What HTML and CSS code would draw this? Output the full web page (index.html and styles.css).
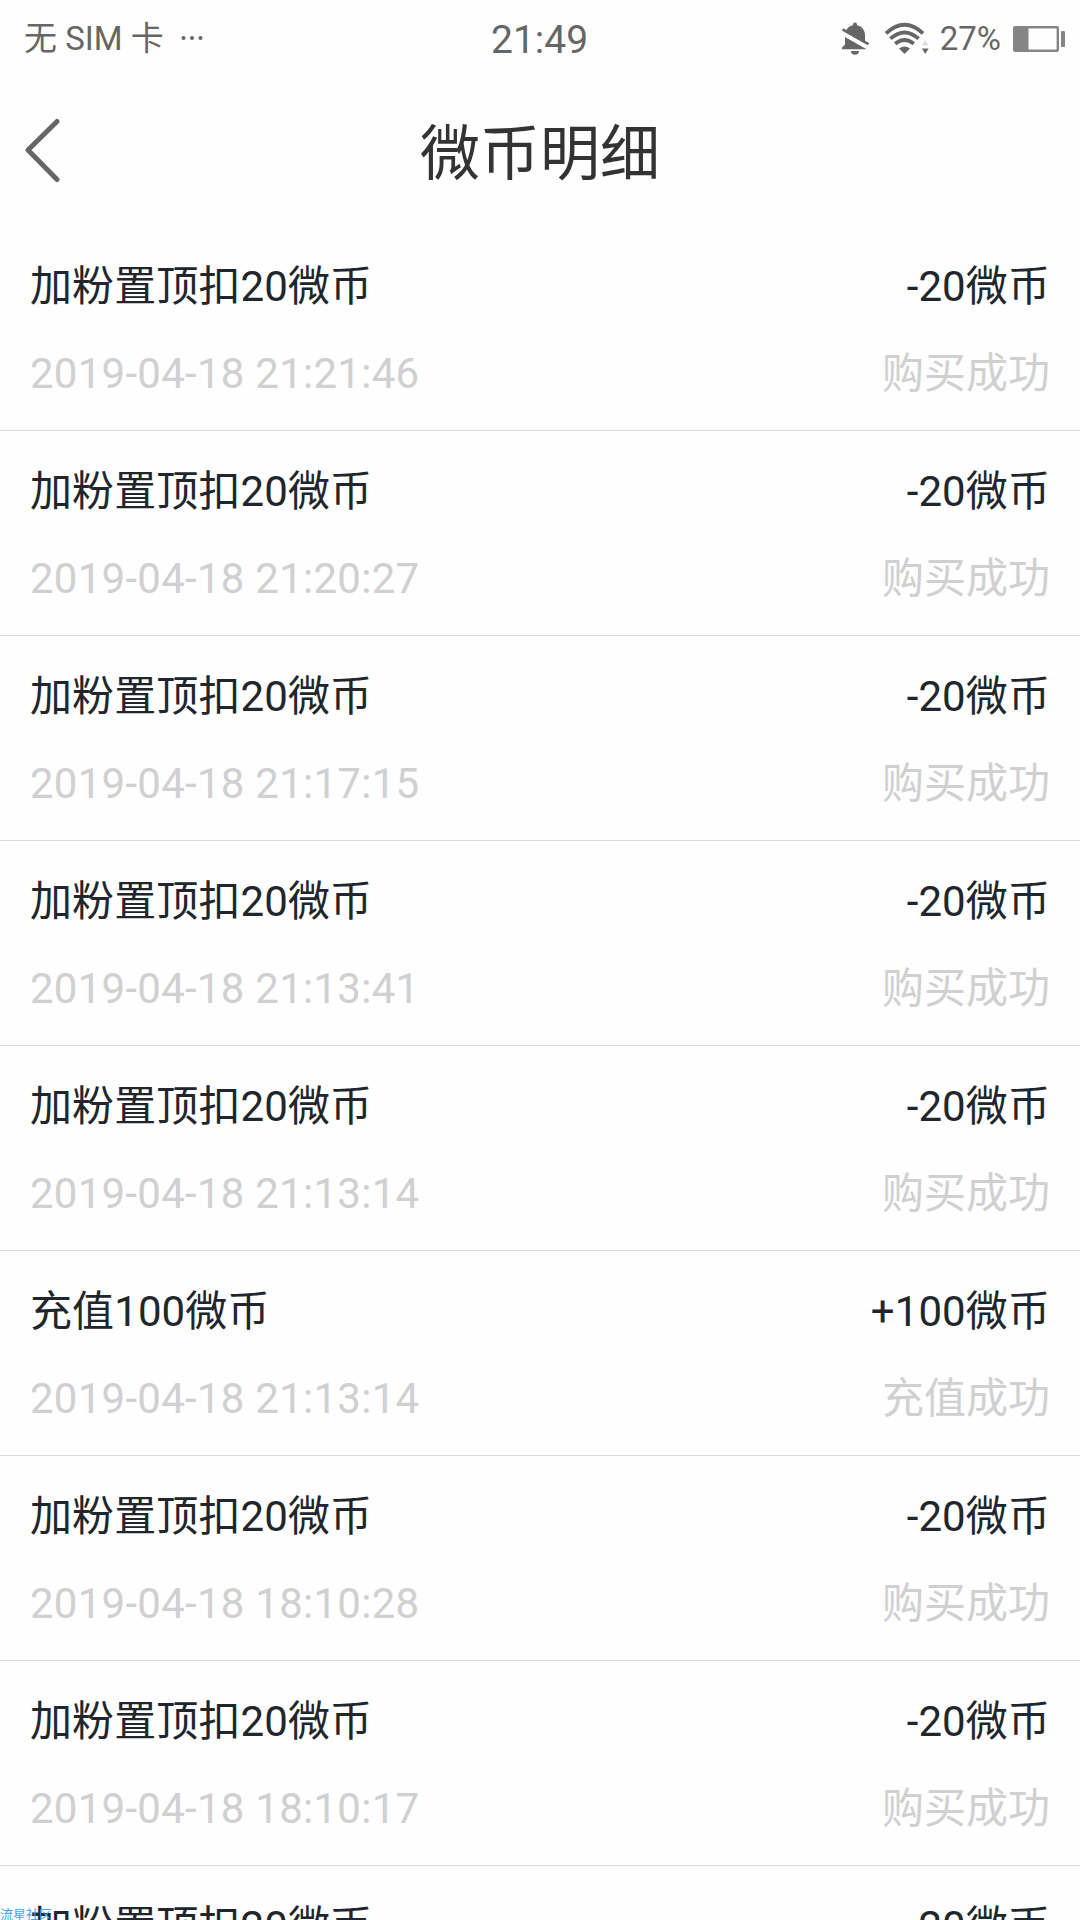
FILE: index.html
```html
<!DOCTYPE html>
<html lang="zh-CN">
<head>
    <meta charset="UTF-8">
    <meta name="viewport" content="width=device-width, initial-scale=1.0">
    <title>微币明细</title>
    <link rel="stylesheet" href="styles.css">
</head>
<body>
    <!-- Status bar -->
    <div class="status-bar">
        <div class="carrier">
            <span>无 SIM 卡</span>
            <svg class="dots" width="22" height="6" viewBox="0 0 22 6">
                <circle cx="2.5" cy="2" r="2"/>
                <circle cx="11" cy="2" r="2"/>
                <circle cx="19.5" cy="2" r="2"/>
            </svg>
        </div>
        <div class="clock">21:49</div>
        <div class="indicators">
            <svg class="bell" width="28" height="33" viewBox="0 0 28 33">
                <path d="M12 3.2V2.6a2 2 0 0 1 4 0v.6c5 1.2 8 5 8 10v9.3l3 3.5v1.2H1V25.6l3-3.1V13.2c0-5 3-8.800 8-10zM10 29h8a4 3.8 0 0 1-8 0z"/>
                <path class="gap" d="M-1 9.600L28 26.200"/>
                <path class="slash" d="M1.500 7.400L27.500 22.200"/>
            </svg>
            <svg class="wifi" width="45" height="33" viewBox="0 0 45 33">
                <path class="arc" d="M2 11.400Q20.500-5.800 39 11.400M6.400 16.600Q20.500 4.200 34.600 16.600M11.200 21.800Q20.500 14.200 29.800 21.800"/>
                <path d="M15 26.400Q20.500 22.600 26 26.400L20.500 32z"/>
                <path class="up" d="M38 23.200h6.600L41.300 18.200z"/>
                <path d="M38 26.600h6.600L41.300 32z"/>
            </svg>
            <span class="percent">27%</span>
            <svg class="battery" width="53" height="26" viewBox="0 0 53 26">
                <rect class="case" x="1.200" y="1.200" width="43.600" height="23.600" rx="0.800"/>
                <rect x="1" y="1" width="14.500" height="24"/>
                <rect x="48" y="5" width="4" height="16" rx="1"/>
            </svg>
        </div>
    </div>

    <!-- Page header -->
    <div class="header">
        <svg class="back" width="36" height="66" viewBox="0 0 36 66">
            <path d="M33 3.500L4 32L33 61.500"/>
        </svg>
        <h1>微币明细</h1>
    </div>

    <!-- Coin records -->
    <ul class="records">
        <li class="record">
            <div class="line"><span>加粉置顶扣20微币</span><span>-20微币</span></div>
            <div class="line sub"><span>2019-04-18 21:21:46</span><span>购买成功</span></div>
        </li>
        <li class="record">
            <div class="line"><span>加粉置顶扣20微币</span><span>-20微币</span></div>
            <div class="line sub"><span>2019-04-18 21:20:27</span><span>购买成功</span></div>
        </li>
        <li class="record">
            <div class="line"><span>加粉置顶扣20微币</span><span>-20微币</span></div>
            <div class="line sub"><span>2019-04-18 21:17:15</span><span>购买成功</span></div>
        </li>
        <li class="record">
            <div class="line"><span>加粉置顶扣20微币</span><span>-20微币</span></div>
            <div class="line sub"><span>2019-04-18 21:13:41</span><span>购买成功</span></div>
        </li>
        <li class="record">
            <div class="line"><span>加粉置顶扣20微币</span><span>-20微币</span></div>
            <div class="line sub"><span>2019-04-18 21:13:14</span><span>购买成功</span></div>
        </li>
        <li class="record">
            <div class="line"><span>充值100微币</span><span>+100微币</span></div>
            <div class="line sub"><span>2019-04-18 21:13:14</span><span>充值成功</span></div>
        </li>
        <li class="record">
            <div class="line"><span>加粉置顶扣20微币</span><span>-20微币</span></div>
            <div class="line sub"><span>2019-04-18 18:10:28</span><span>购买成功</span></div>
        </li>
        <li class="record">
            <div class="line"><span>加粉置顶扣20微币</span><span>-20微币</span></div>
            <div class="line sub"><span>2019-04-18 18:10:17</span><span>购买成功</span></div>
        </li>
        <li class="record">
            <div class="line"><span>加粉置顶扣20微币</span><span>-20微币</span></div>
        </li>
    </ul>

    <div class="watermark">流星社区</div>
</body>
</html>
```

FILE: styles.css
```css
/* Global styles */
* {
    box-sizing: border-box;
}

body {
    position: relative;
    height: 1920px;
    margin: 0;
    overflow: hidden;
    background-color: #fefefe;
    color: #20262c;
    font-family: Roboto, "Noto Sans CJK SC", sans-serif;
}

svg {
    display: block;
    fill: #666;
}

/* Status bar */
.status-bar {
    display: grid;
    grid-template-columns: 1fr 98px 1fr;
    align-items: center;
    height: 76px;
    padding: 2px 14px 0 24px;
    color: #666;
    font-size: 33px;
    line-height: 48px;
}

.carrier,
.indicators {
    display: flex;
    align-items: center;
}

.dots {
    margin-left: 17px;
}

.clock {
    margin-left: -5px;
    padding-top: 1px;
    font-size: 39px;
}

.indicators {
    justify-content: flex-end;
    margin-top: -1px;
}

.percent {
    padding-top: 1px;
}

.bell {
    margin-right: 15px;
}

.bell .gap {
    fill: none;
    stroke: #fefefe;
    stroke-width: 4.4;
}

.bell .slash {
    fill: none;
    stroke: #666;
    stroke-width: 2.6;
}

.wifi {
    margin-right: 11px;
}

.wifi .arc {
    fill: none;
    stroke: #666;
    stroke-width: 3.8;
}

.wifi .up {
    fill: #ddd;
}

.battery {
    margin-left: 12px;
    fill: #858585;
}

.battery .case {
    fill: none;
    stroke: #858585;
    stroke-width: 2.4;
}

/* Header */
.header {
    display: grid;
    grid-template-columns: 1fr auto 1fr;
    align-items: center;
    height: 150px;
    padding: 0 24px;
}

.back path {
    fill: none;
    stroke: #666;
    stroke-width: 5;
    stroke-linecap: round;
    stroke-linejoin: round;
}

h1 {
    margin: 0;
    padding-top: 7px;
    color: #333;
    font-size: 60px;
    font-weight: 400;
    line-height: 88px;
}

/* Records */
.records {
    margin: 0;
    padding: 0;
    list-style: none;
}

.record {
    display: flex;
    flex-direction: column;
    gap: 27px;
    height: 205px;
    padding: 31px 30px 0;
    border-bottom: 1px solid #d9dbdc;
}

.record:last-child {
    height: 54px;
    border-bottom: none;
}

.line {
    display: flex;
    justify-content: space-between;
    font-size: 42px;
    letter-spacing: 0.1px;
    line-height: 60px;
}

.sub {
    color: #d0d0d0;
    letter-spacing: 0.26px;
}

.sub span:last-child {
    letter-spacing: 0;
}

/* Watermark */
.watermark {
    position: absolute;
    left: 0;
    bottom: -3px;
    color: #42a5f0;
    font-size: 13px;
    line-height: 16px;
}
```
